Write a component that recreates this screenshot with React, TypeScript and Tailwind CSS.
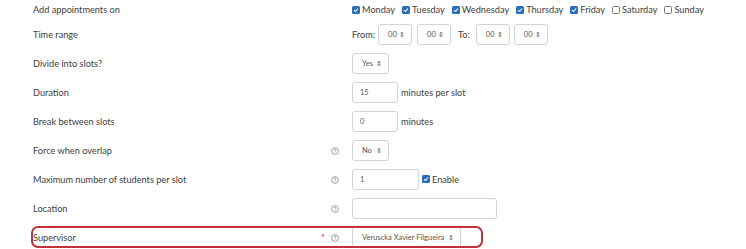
import React from 'react';

const days = [
  { name: 'Monday', checked: true },
  { name: 'Tuesday', checked: true },
  { name: 'Wednesday', checked: true },
  { name: 'Thursday', checked: true },
  { name: 'Friday', checked: true },
  { name: 'Saturday', checked: false },
  { name: 'Sunday', checked: false },
];

const Check = ({ checked }: { checked: boolean }) =>
  checked ? (
    <span className="inline-flex w-[8px] h-[8px] items-center justify-center rounded-[1.5px] bg-[#2a6ebb]">
      <svg width="6" height="6" viewBox="0 0 6 6">
        <path d="M1 3.1 L2.5 4.5 L5 1.5" stroke="white" strokeWidth="1.1" fill="none" />
      </svg>
    </span>
  ) : (
    <span className="inline-block w-[8px] h-[8px] rounded-[1.5px] border border-[#7a7a7a] bg-white" />
  );

const Help = () => (
  <svg width="8" height="8" viewBox="0 0 8 8" className="text-[#8a8a8a]">
    <circle cx="4" cy="4" r="3.4" stroke="currentColor" strokeWidth="0.8" fill="none" />
    <path d="M2.9 3.1 C2.9 2 5.1 2 5.1 3.1 C5.1 3.8 4 3.9 4 4.7" stroke="currentColor" strokeWidth="0.8" fill="none" />
    <circle cx="4" cy="5.8" r="0.45" fill="currentColor" />
  </svg>
);

const Select = ({ value, w }: { value: string; w: string }) => (
  <div className={`${w} h-[21px] border border-[#ced4da] rounded-[3px] bg-white flex items-center justify-between pl-[9px] pr-[6px] text-[7.5px] text-[#555]`}>
    <span>{value}</span>
    <span className="text-[7px] leading-none text-[#555]">⇕</span>
  </div>
);

const Input = ({ value, w }: { value: string; w: string }) => (
  <div className={`${w} h-[21px] border border-[#ced4da] rounded-[3px] bg-white flex items-center pl-[7px] text-[7.5px] text-[#555]`}>
    {value}
  </div>
);

const Row = ({
  label,
  help,
  req,
  h = 'h-[29px]',
  children,
}: {
  label: string;
  help?: boolean;
  req?: boolean;
  h?: string;
  children?: React.ReactNode;
}) => (
  <div className={`flex items-center ${h}`}>
    <div className="w-[318px] pl-[33px]">{label}</div>
    <div className="w-[34px] flex items-center">
      <span className="w-[13px] text-[#c02a2a] text-[9px] pl-[3px]">{req ? '*' : ''}</span>
      {help && <Help />}
    </div>
    <div className="flex items-center">{children}</div>
  </div>
);

export default function App() {
  return (
    <div className="w-[746px] h-[249px] bg-white overflow-hidden text-[9.2px] text-[#404040] font-['Lato',sans-serif]">
      <Row label="Add appointments on" h="h-[20px]">
        <div className="flex items-center">
          {days.map((d) => (
            <div key={d.name} className="flex items-center gap-[2px] mr-[7px]">
              <Check checked={d.checked} />
              <span>{d.name}</span>
            </div>
          ))}
        </div>
      </Row>
      <Row label="Time range">
        <span className="mr-[3px]">From:</span>
        <Select value="00" w="w-[34px]" />
        <div className="w-[5px]" />
        <Select value="00" w="w-[34px]" />
        <span className="ml-[7px] mr-[6px]">To:</span>
        <Select value="00" w="w-[34px]" />
        <div className="w-[4px]" />
        <Select value="00" w="w-[34px]" />
      </Row>
      <Row label="Divide into slots?">
        <Select value="Yes" w="w-[37px]" />
      </Row>
      <Row label="Duration">
        <Input value="15" w="w-[46px]" />
        <span className="ml-[3px]">minutes per slot</span>
      </Row>
      <Row label="Break between slots">
        <Input value="0" w="w-[46px]" />
        <span className="ml-[3px]">minutes</span>
      </Row>
      <Row label="Force when overlap" help>
        <Select value="No" w="w-[37px]" />
      </Row>
      <Row label="Maximum number of students per slot" help>
        <Input value="1" w="w-[67px]" />
        <div className="ml-[3px] flex items-center gap-[2px]">
          <Check checked />
          <span>Enable</span>
        </div>
      </Row>
      <Row label="Location" help>
        <Input value="" w="w-[145px]" />
      </Row>
      <div className="relative">
        <div className="absolute left-[31px] top-[3px] w-[452px] h-[22px] rounded-[7px] border-2 border-[#c0313a] pointer-events-none" />
        <Row label="Supervisor" help req>
          <Select value="Veruscka Xavier Filgueira" w="w-[109px]" />
        </Row>
      </div>
    </div>
  );
}
